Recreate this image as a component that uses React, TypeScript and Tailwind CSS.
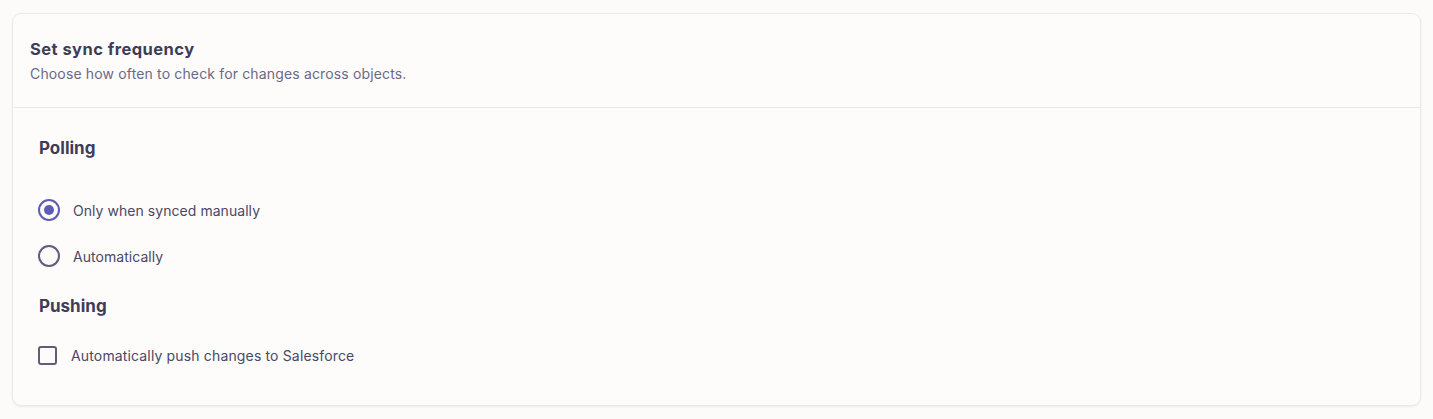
import { useState } from 'react';

export default function App() {
  const [mode, setMode] = useState<'manual' | 'auto'>('manual');
  const [push, setPush] = useState(false);

  return (
    <div
      className="min-h-[419px] bg-[#fcfbfa] px-[12px] pt-[13px]"
      style={{ fontFamily: 'Inter, "Noto Sans", sans-serif' }}
    >
      <div className="rounded-[9px] border border-[#ebe9ee] bg-[#fdfcfb] shadow-[0_1px_2px_rgba(60,56,90,0.08)]">
        {/* Header */}
        <div className="border-b border-[#ebe9ee] px-[17px] pt-[24px] pb-[23px]">
          <h2 className="text-[16.5px] font-bold leading-[22px] tracking-[0.45px] text-[#3e3c59]">Set sync frequency</h2>
          <p className="mt-[4px] text-[14px] leading-[20px] tracking-[0.15px] text-[#6b6986]">
            Choose how often to check for changes across objects.
          </p>
        </div>

        {/* Body */}
        <div className="px-[25px] pt-[28px] pb-[38px]">
          <h3 className="pl-[1px] text-[17px] font-bold leading-[24px] text-[#3e3c59]">Polling</h3>

          <div className="mt-[38px] flex flex-col gap-[22px]">
            <label className="flex h-[24px] cursor-pointer items-center gap-[13px]" onClick={() => setMode('manual')}>
              <span
                className={
                  mode === 'manual'
                    ? 'flex h-[22px] w-[22px] items-center justify-center rounded-full border-2 border-[#5d5db3]'
                    : 'flex h-[22px] w-[22px] items-center justify-center rounded-full border-2 border-[#5f5d79]'
                }
              >
                {mode === 'manual' && <span className="h-[10px] w-[10px] rounded-full bg-[#5d5db3]" />}
              </span>
              <span className="text-[14px] tracking-[0.05px] text-[#4a4866]">Only when synced manually</span>
            </label>
            <label className="flex h-[24px] cursor-pointer items-center gap-[13px]" onClick={() => setMode('auto')}>
              <span
                className={
                  mode === 'auto'
                    ? 'flex h-[22px] w-[22px] items-center justify-center rounded-full border-2 border-[#5d5db3]'
                    : 'flex h-[22px] w-[22px] items-center justify-center rounded-full border-2 border-[#5f5d79]'
                }
              >
                {mode === 'auto' && <span className="h-[10px] w-[10px] rounded-full bg-[#5d5db3]" />}
              </span>
              <span className="text-[14px] tracking-[0.05px] text-[#4a4866]">Automatically</span>
            </label>
          </div>

          <h3 className="mt-[26px] pl-[1px] text-[17px] font-bold leading-[24px] text-[#3e3c59]">Pushing</h3>

          <label className="mt-[25px] flex h-[24px] cursor-pointer items-center gap-[14px]" onClick={() => setPush(!push)}>
            <span
              className={
                push
                  ? 'flex h-[19px] w-[19px] items-center justify-center rounded-[3px] border-2 border-[#5d5db3] bg-[#5d5db3]'
                  : 'flex h-[19px] w-[19px] items-center justify-center rounded-[3px] border-2 border-[#5f5d79]'
              }
            >
              {push && (
                <svg viewBox="0 0 16 16" className="h-[12px] w-[12px]" fill="none" stroke="white" strokeWidth="2.5">
                  <path d="M3 8.5l3.2 3L13 4.5" />
                </svg>
              )}
            </span>
            <span className="text-[14px] tracking-[0.15px] text-[#4a4866]">Automatically push changes to Salesforce</span>
          </label>
        </div>
      </div>
    </div>
  );
}
